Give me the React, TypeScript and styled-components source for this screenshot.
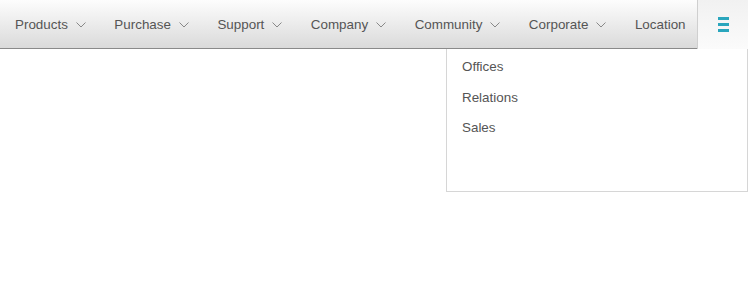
import React from "react";
import styled, { createGlobalStyle } from "styled-components";

const Global = createGlobalStyle`
  html, body { margin: 0; padding: 0; background: #fff; }
  body { font-family: "Liberation Sans", Arial, sans-serif; }
`;

const Page = styled.div`
  position: relative;
  width: 748px;
  height: 294px;
`;

const Toolbar = styled.nav`
  display: flex;
  align-items: stretch;
  height: 49px;
`;

const Items = styled.div`
  flex: 1;
  min-width: 0;
  display: flex;
  align-items: center;
  background: linear-gradient(#fdfdfd, #dadada);
  border-bottom: 1px solid #8a8a8a;
  box-sizing: border-box;
`;

const Item = styled.div`
  display: flex;
  align-items: center;
  height: 100%;
  padding: 0 13.5px 0 15px;
  color: #555;
  font-size: 13.4px;
  white-space: nowrap;
  flex-shrink: 0;
`;

const Chevron = styled.svg`
  margin-left: 8px;
  margin-top: 1px;
  width: 10px;
  height: 6px;
`;

const MenuButton = styled.div`
  flex: 0 0 51px;
  display: flex;
  align-items: center;
  justify-content: center;
  background: linear-gradient(#f1f1f1, #fbfbfb);
  border-left: 1px solid #cfcfcf;
  box-sizing: border-box;
`;

const Popup = styled.div`
  position: absolute;
  top: 49px;
  right: 0;
  width: 302px;
  height: 143px;
  box-sizing: border-box;
  background: #fff;
  border: 1px solid #d6d6d6;
  border-top: none;
  padding-top: 8px;
`;

const PopupItem = styled.div`
  height: 30.5px;
  line-height: 20px;
  padding: 0 15px;
  color: #555;
  font-size: 13.4px;
`;

const labels: { text: string; chevron: boolean }[] = [
  { text: "Products", chevron: true },
  { text: "Purchase", chevron: true },
  { text: "Support", chevron: true },
  { text: "Company", chevron: true },
  { text: "Community", chevron: true },
  { text: "Corporate", chevron: true },
  { text: "Location", chevron: false },
];

export default function App() {
  return (
    <Page>
      <Global />
      <Toolbar>
        <Items>
          {labels.map((l) => (
            <Item key={l.text}>
              {l.text}
              {l.chevron && (
                <Chevron viewBox="0 0 10 6">
                  <path d="M0.5 0.5 L5 5 L9.5 0.5" fill="none" stroke="#888" strokeWidth="1" />
                </Chevron>
              )}
            </Item>
          ))}
        </Items>
        <MenuButton>
          <svg width="11" height="15" viewBox="0 0 11 15">
            <rect x="0" y="0" width="11" height="3" fill="#2aa6bd" />
            <rect x="0" y="6" width="11" height="3" fill="#2aa6bd" />
            <rect x="0" y="12" width="11" height="3" fill="#2aa6bd" />
          </svg>
        </MenuButton>
      </Toolbar>
      <Popup>
        <PopupItem>Offices</PopupItem>
        <PopupItem>Relations</PopupItem>
        <PopupItem>Sales</PopupItem>
      </Popup>
    </Page>
  );
}
